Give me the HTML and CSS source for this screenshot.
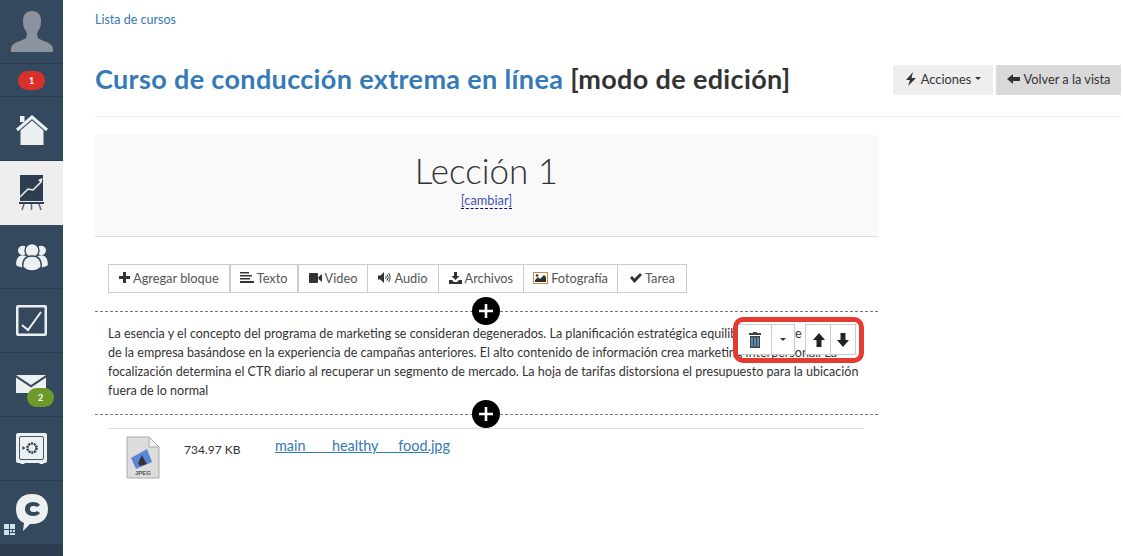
FILE: index.html
```html
<!DOCTYPE html>
<html lang="es">
<head>
<meta charset="utf-8">
<title>Lección 1</title>
<link rel="stylesheet" href="styles.css">
</head>
<body>
<div class="app">
  <nav class="side">
    <a class="nav avatar"><svg width="42" height="41" viewBox="0 0 42 41"><path class="gray" d="M21 0c-6 0-9 4-9 10 0 4 1 8 3 10 1 2 1 5 0 7-3 3-15 4-15 11v3h42v-3c0-7-12-8-15-11-1-2-1-5 0-7 2-2 3-6 3-10 0-6-3-10-9-10z"/></svg></a>
    <a class="nav badge-row"><span class="pill red">1</span></a>
    <a class="nav"><svg width="34" height="34" viewBox="0 0 34 34"><path class="ic" d="M5.500 18.500 17 8.500l11.500 10V33H5.500z"/><path class="line" d="M2 18 17 5l15 13"/><path class="ic" d="M5 4h4.500v6H5z"/></svg></a>
    <a class="nav active"><svg width="26" height="36" viewBox="0 0 26 36"><path class="dark" d="M1 0h23v26H1z"/><path class="trend" d="M1 22l8-8 5 1 8-8"/><path class="head-tip" d="M19 5l4.500-2-1 5z"/><path class="dark2" d="M0 27h25v2H0z"/><path class="legs" d="M5 29 3 35M12.500 29v6M20 29l2 6"/></svg></a>
    <a class="nav"><svg width="32" height="28" viewBox="0 0 34 30"><circle class="ic" cx="7" cy="8" r="5"/><circle class="ic" cx="27" cy="8" r="5"/><path class="ic" d="M0 23c0-7 3-10 7-10s7 3 7 10l-5 3c-4 0-9-1-9-3zM34 23c0-7-3-10-7-10s-7 3-7 10l5 3c4 0 9-1 9-3z"/><circle class="ic outl" cx="17" cy="8" r="7.500"/><path class="ic outl" d="M7 25c0-8 4-11 10-11s10 3 10 11c-2 3-6 5-10 5s-8-2-10-5z"/></svg></a>
    <a class="nav"><svg width="31" height="31" viewBox="0 0 31 31"><path class="ic" fill-rule="evenodd" d="M2 0h27a2 2 0 0 1 2 2v27a2 2 0 0 1-2 2H2a2 2 0 0 1-2-2V2a2 2 0 0 1 2-2zm.500 2.500v26h26v-26z"/><path class="check" d="M6 20l6 5L25 7"/></svg></a>
    <a class="nav"><span class="mail"><svg width="30" height="18" viewBox="0 0 30 18"><path class="ic" d="M0 0h30L15 10zM0 2.500l15 10 15-10V18H0z"/></svg><span class="pill green">2</span></span></a>
    <a class="nav"><svg width="31" height="31" viewBox="0 0 31 31"><path class="ic" d="M2 0h27a2 2 0 0 1 2 2v26a2 2 0 0 1-2 2h-1l-1 1h-3l-1-1H9l-1 1H5l-1-1H2a2 2 0 0 1-2-2V2a2 2 0 0 1 2-2z"/><rect class="inner" x="3.500" y="3.500" width="24" height="23" rx="1.500"/><circle class="safe" cx="16" cy="15" r="4.500"/><path class="dark2" d="M6.500 13l3 2-3 2z"/></svg></a>
    <a class="nav chat"><svg width="32" height="38" viewBox="0 0 32 38"><path class="ic" fill-rule="evenodd" d="M16 0c10 0 16 6 16 15s-6 15-16 15h-2l-7 7 1-8C3 27 0 22 0 15 0 6 6 0 16 0zm1 8c-5 0-8 3-8 7s3 7 8 7c3 0 6-1 7-3l-3-2c-1 1-2 1-4 1-2 0-3-1-3-3s1-3 3-3c2 0 3 0 4 1l3-2c-1-2-4-3-7-3z"/></svg><svg class="qr" width="11" height="11" viewBox="0 0 11 11"><path class="qrp" d="M0 0h5v5H0zM6 0h5v5H6zM0 6h5v5H0zM6 6h2v2H6zM9 6h2v2H9zM6 9h5v2H6z"/></svg></a>
    <div class="side-foot"></div>
  </nav>
  <main class="main">
    <a class="crumb">Lista de cursos</a>
    <header class="head">
      <h1><a>Curso de conducción extrema en línea</a> [modo de edición]</h1>
      <div class="head-btns">
        <button class="hbtn light"><svg class="hi" width="12" height="14" viewBox="0 0 12 14"><path d="M8 0 1 8h4l-2 6 8-8H6.500z"/></svg> Acciones <i class="caret"></i></button>
        <button class="hbtn grey"><svg class="hi" width="13" height="12" viewBox="0 0 13 12"><path d="M6 1v3h7v4H6v3L0 6z"/></svg> Volver a la vista</button>
      </div>
    </header>
    <div class="rule"></div>
    <section class="lesson">
      <div class="lesson-head">
        <h2>Lección 1</h2>
        <a class="change">[cambiar]</a>
      </div>
      <div class="toolbar">
        <a class="tb thick"><svg width="11" height="11" viewBox="0 0 11 11"><path d="M4 0h3v4h4v3H7v4H4V7H0V4h4z"/></svg> Agregar bloque</a>
        <a class="tb thick slim"><svg width="14" height="11" viewBox="0 0 14 11"><path d="M0 0h9v1.500H0zM0 3h12v1.500H0zM0 6h10v1.500H0zM0 9h14v2H0z"/></svg> Texto</a>
        <a class="tb"><svg width="13" height="10" viewBox="0 0 13 10"><path d="M1 0h7a1 1 0 0 1 1 1v8a1 1 0 0 1-1 1H1a1 1 0 0 1-1-1V1a1 1 0 0 1 1-1zM9.500 4 13 1v8L9.500 6z"/></svg> Video</a>
        <a class="tb"><svg width="13" height="11" viewBox="0 0 13 11"><path d="M0 3.500h2.500L6 0v11L2.500 7.500H0z"/><path class="snd" d="M7.500 4a2 2 0 0 1 0 3M9 2.500a4.500 4.500 0 0 1 0 6M10.500 1a7 7 0 0 1 0 9"/></svg> Audio</a>
        <a class="tb"><svg width="13" height="12" viewBox="0 0 13 12"><path d="M5 0h3v4h2.500l-4 4-4-4H5zM0 8h3l2 2h3l2-2h3v4H0z"/></svg> Archivos</a>
        <a class="tb slim"><svg width="15" height="12" viewBox="0 0 15 12"><path class="pic" fill-rule="evenodd" d="M0 0h15v12H0zm1 1v10h13V1z"/><path d="M2 10V8l3-3 2 2 4-4 2 2v5z"/><circle cx="4" cy="3.500" r="1.300"/></svg> Fotografía</a>
        <a class="tb wide-last"><svg width="12" height="10" viewBox="0 0 12 10"><path d="M0 5l2-2 2.500 2.500L10 0l2 2-7.500 8z"/></svg> Tarea</a>
      </div>
      <div class="divider"><span class="plus"><svg width="14" height="14" viewBox="0 0 14 14"><path d="M5.700 0h2.600v5.700H14v2.600H8.300V14H5.700V8.300H0V5.700h5.700z"/></svg></span></div>
      <div class="block">
        <p>La esencia y el concepto del programa de marketing se consideran degenerados. La planificación estratégica equilibra esa parte<br>de la empresa basándose en la experiencia de campañas anteriores. El alto contenido de información crea marketing interpersonal. La<br>focalización determina el CTR diario al recuperar un segmento de mercado. La hoja de tarifas distorsiona el presupuesto para la ubicación<br>fuera de lo normal</p>
        <div class="actions">
          <button class="ab wide"><svg width="14" height="16" viewBox="0 0 14 16"><path class="bin" d="M1 1h4V0h4v1h4v2H1z"/><path class="bin" d="M2 4h10v12H2z"/><path class="binb" d="M3.200 5.500h1.600V14.500H3.200zM6.200 5.500h1.600V14.500H6.200zM9.200 5.500h1.600V14.500H9.200z"/></svg></button>
          <button class="ab car"><i class="caret"></i></button>
          <button class="ab arr gap"><svg width="12" height="14" viewBox="0 0 12 14"><path d="M6 0l6 7H8.500v7h-5V7H0z"/></svg></button>
          <button class="ab arr"><svg width="12" height="14" viewBox="0 0 12 14"><path d="M6 14l6-7H8.500V0h-5v7H0z"/></svg></button>
        </div>
        <div class="redbox"></div>
      </div>
      <div class="divider low"><span class="plus"><svg width="14" height="14" viewBox="0 0 14 14"><path d="M5.700 0h2.600v5.700H14v2.600H8.300V14H5.700V8.300H0V5.700h5.700z"/></svg></span></div>
      <div class="file">
        <svg class="jpeg" width="34" height="43" viewBox="0 0 34 43"><path class="paper" d="M1 1h22l10 10v31H1z"/><path class="fold" d="M23 1l10 10H23z"/><path class="blue" d="M5 22l16-9 5 13-16 7z"/><path class="dk" d="M12 27l4-8 3 6 2 3-7 2z"/><text class="jt" x="17" y="39">JPEG</text></svg>
        <span class="size">734.97 KB</span>
        <a class="fname">main____healthy___food.jpg</a>
      </div>
    </section>
  </main>
</div>
</body>
</html>
```
FILE: styles.css
```css
* { box-sizing: border-box; }
html, body { margin: 0; height: 100%; }
body { font-family: Lato, "Open Sans", sans-serif; color: #333; background: #fff; overflow: hidden; }
.app { display: flex; min-height: 556px; }
.side { width: 63px; flex: none; background: #34495e; display: flex; flex-direction: column; }
.nav { height: 64px; display: flex; align-items: center; justify-content: center; border-bottom: 1px solid #2b3d50; flex: none; position: relative; }
.badge-row { height: 33px; }
.active { background: #eee; border-bottom-color: #eee; }
.pill { display: block; color: #fff; font-size: 9px; font-weight: 700; text-align: center; border-radius: 10px; }
.red { background: #d9302c; width: 27px; height: 19px; line-height: 19px; }
.green { background: #6f9a2b; width: 27px; height: 19px; line-height: 19px; position: absolute; left: 11px; top: 13px; }
.mail { position: relative; display: block; width: 38px; height: 32px; margin: 13px 0 0 7px; }
.mail svg { position: absolute; left: 0; top: 0; }
.gray { fill: #8b949e; }
.ic { fill: #ecf0f1; }
.outl { stroke: #34495e; stroke-width: 1.500; }
.line { fill: none; stroke: #ecf0f1; stroke-width: 3; }
.dark { fill: #2c3e50; }
.dark2 { fill: #2c3e50; }
.trend { fill: none; stroke: #ecf0f1; stroke-width: 1.500; }
.head-tip { fill: #ecf0f1; }
.legs { fill: none; stroke: #5e6b78; stroke-width: 1.500; }
.check { fill: none; stroke: #ecf0f1; stroke-width: 2; }
.inner { fill: none; stroke: #44566a; stroke-width: 1; }
.safe { fill: none; stroke: #2c3e50; stroke-width: 2.500; stroke-dasharray: 2 .8; }
.qr { position: absolute; left: 4px; top: 43px; }
.qrp { fill: #cfe0ee; }
.side-foot { flex: 1; background: #2c3e50; }
.main { flex: 1; min-width: 0; padding: 0 2px 0 32px; }
.crumb { display: block; margin-top: 12px; font-size: 12.500px; line-height: 16px; color: #337ab7; }
.head { display: flex; justify-content: space-between; align-items: center; margin-top: 27px; height: 50px; }
h1 { margin: -2px 0 0; font-size: 27px; font-weight: 700; line-height: 32px; color: #333; letter-spacing: .35px; }
h1 a { color: #337ab7; }
.head-btns { display: flex; gap: 3px; }
.hbtn { height: 30px; border: 0; padding: 0 0 3px; font: 12.800px Lato, sans-serif; color: #333; display: flex; align-items: center; gap: 4px; white-space: nowrap; }
.light { background: #eee; width: 100px; justify-content: center; }
.grey { background: #d9d9d9; width: 125px; justify-content: center; }
.hi { fill: #333; }
.caret { display: inline-block; width: 0; height: 0; border: 3.500px solid transparent; border-top-color: #333; border-bottom: 0; }
.rule { height: 1px; background: #eee; margin-top: 11px; }
.lesson { width: 783px; margin-top: 18px; }
.lesson-head { background: #f9f9f9; border-bottom: 1px solid #ddd; height: 102px; text-align: center; padding-top: 15px; }
h2 { margin: 0 0 -1px; font-size: 35px; font-weight: 300; line-height: 40px; color: #333; }
.change { display: inline-block; font-size: 12.800px; line-height: 15px; color: #3f51b5; border-bottom: 1px dashed #00008b; }
.toolbar { display: flex; margin: 27px 0 0 13px; }
.tb { height: 29px; display: flex; align-items: center; gap: 3px; padding: 0 10px 2px; border: 1px solid #ccc; margin-left: -1px; font-size: 12.800px; color: #555; background: #fff; white-space: nowrap; }
.tb:first-child { margin-left: 0; }
.tb svg { fill: #333; }
.tb.thick { border-width: 1px 2px 1px 1px; }
.tb.slim { padding: 0 9px 2px; }
.tb.wide-last { padding: 0 11px 2px 12px; }
.snd { fill: none; stroke: #333; stroke-width: 1; }
.pic { fill: #c9883a; }
.divider { border-top: 1px dashed #777; height: 0; margin-top: 18px; position: relative; display: flex; justify-content: center; }
.plus { width: 28px; height: 28px; background: #000; border-radius: 50%; display: flex; align-items: center; justify-content: center; margin: -15px 1px 0 0; position: relative; z-index: 1; }
.plus svg { fill: #fff; }
.block { position: relative; padding: 12px 13px 0 13px; }
.block p { margin: 0; font-size: 12.550px; line-height: 19px; color: #333; white-space: nowrap; }
.divider.low { margin-top: 14px; }
.actions { position: absolute; left: 643px; top: 12px; display: flex; }
.ab { height: 31px; border: 1px solid #ccc; background: #fff; padding: 0; margin: 0 0 0 -1px; display: flex; align-items: center; justify-content: center; }
.ab svg { fill: #222; }
.wide { width: 35px; }
.car { width: 24px; }
.arr { width: 26px; }
.gap { margin-left: 10px; padding-left: 2px; }
.bin { fill: #444; }
.binb { fill: #5b9bd5; }
.redbox { position: absolute; left: 638px; top: 5px; width: 131px; height: 46px; border: 5px solid #e53a2f; border-radius: 10px; pointer-events: none; }
.file { margin: 13px 14px 0 13px; border-top: 1px solid #ddd; display: flex; align-items: flex-start; position: relative; height: 60px; }
.jpeg { margin: 7px 0 0 18px; flex: none; }
.paper { fill: #ddd; stroke: #aaa; }
.fold { fill: #f2f2f2; stroke: #aaa; }
.blue { fill: #5b86d6; }
.dk { fill: #333; }
.jt { font: 700 6px "Liberation Sans", sans-serif; fill: #555; text-anchor: middle; }
.size { font-size: 12px; line-height: 16px; margin: 13px 0 0 24px; color: #333; width: 91px; }
.fname { font-size: 14.400px; line-height: 20px; margin-top: 7px; color: #337ab7; text-decoration: underline; }
```
